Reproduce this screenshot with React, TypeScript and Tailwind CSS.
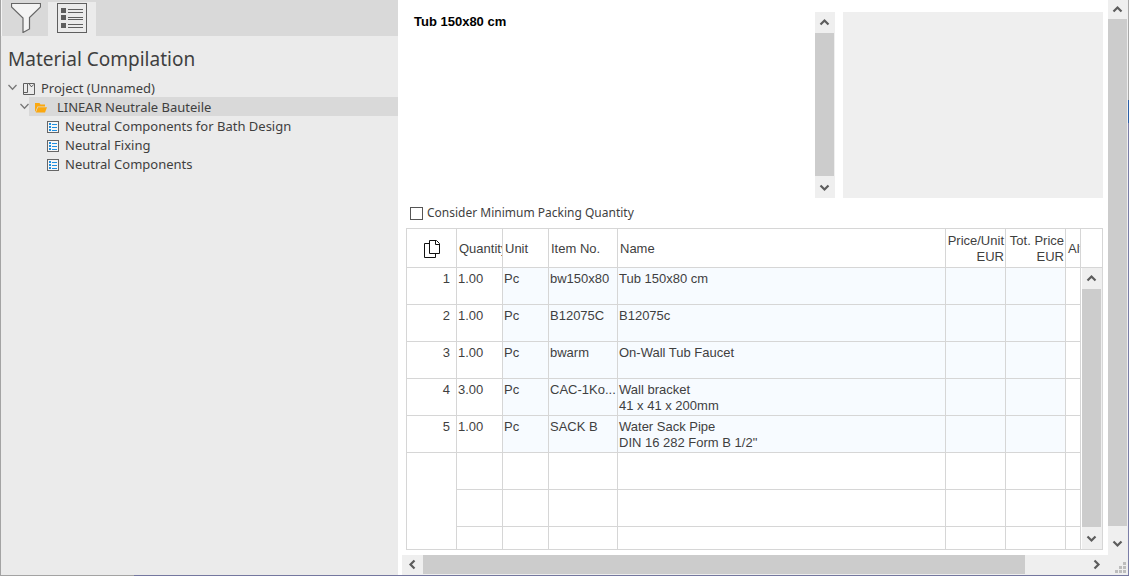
import { useState } from 'react';

type Item = {
  quantity: string;
  unit: string;
  itemNo: string;
  name: string[];
};

type Direction = 'up' | 'down' | 'left' | 'right';

const ITEMS: Item[] = [
  { quantity: '1.00', unit: 'Pc', itemNo: 'bw150x80', name: ['Tub 150x80 cm'] },
  { quantity: '1.00', unit: 'Pc', itemNo: 'B12075C', name: ['B12075c'] },
  { quantity: '1.00', unit: 'Pc', itemNo: 'bwarm', name: ['On-Wall Tub Faucet'] },
  { quantity: '3.00', unit: 'Pc', itemNo: 'CAC-1Ko...', name: ['Wall bracket', '41 x 41 x 200mm'] },
  { quantity: '1.00', unit: 'Pc', itemNo: 'SACK B', name: ['Water Sack Pipe', 'DIN 16 282 Form B 1/2"'] },
];

const EMPTY_ROWS = [0, 1, 2];

const LEAVES = ['Neutral Components for Bath Design', 'Neutral Fixing', 'Neutral Components'];

const ARROWS: Record<Direction, string> = {
  up: 'M1.5 7.5L5.5 3.5L9.5 7.5',
  down: 'M1.5 3.5L5.5 7.5L9.5 3.5',
  left: 'M7.5 1.5L3.5 5.5L7.5 9.5',
  right: 'M3.5 1.5L7.5 5.5L3.5 9.5',
};

function Arrow({ direction }: { direction: Direction }) {
  return (
    <svg width="11" height="11" viewBox="0 0 11 11" fill="none" stroke="#5c5c5c" strokeWidth="2.2">
      <path d={ARROWS[direction]} />
    </svg>
  );
}

function VerticalScrollbar() {
  return (
    <div className="flex w-5 shrink-0 flex-col bg-[#efefef] pr-px">
      <button aria-label="Scroll up" className="flex h-[21px] shrink-0 items-center justify-center">
        <Arrow direction="up" />
      </button>
      <div className="flex-1 bg-[#cccccc]" />
      <button aria-label="Scroll down" className="flex h-[22px] shrink-0 items-center justify-center">
        <Arrow direction="down" />
      </button>
    </div>
  );
}

function FunnelIcon() {
  return (
    <svg width="30" height="30" viewBox="0 0 30 30" fill="#f4f4f4" stroke="#666666">
      <path d="M0.5 0.5H29.5V4L18.5 14.5V26L12 29.5V15L0.5 4Z" strokeWidth="1.2" />
    </svg>
  );
}

function ListIcon() {
  return (
    <svg width="30" height="30" viewBox="0 0 30 30" shapeRendering="crispEdges">
      <rect x="0.5" y="0.5" width="29" height="29" fill="none" stroke="#5f5f5f" />
      <path d="M4 5h5v5H4zM4 12h5v5H4zM4 20h5v5H4z" fill="#5f5f5f" />
      <path d="M11 6.5h15M11 9.5h15M11 14.5h15M11 16.5h15M11 21.5h15M11 24.5h15" stroke="#5f5f5f" />
    </svg>
  );
}

function TreeArrow() {
  return (
    <svg width="9" height="7" viewBox="0 0 9 7" fill="none" stroke="#777777" className="shrink-0">
      <path d="M0.5 1L4.5 5.2L8.5 1" strokeWidth="1.3" />
    </svg>
  );
}

function ProjectIcon() {
  return (
    <svg width="12" height="12" viewBox="0 0 12 12" fill="none" stroke="#5f5f5f" className="shrink-0">
      <path d="M4.5 9.5V0.5H0.5V11.5H11.5V0.5H4.5" />
      <path d="M0.5 9.5H4.5M6 0.5L8 3.5H9L10.5 1.5" />
    </svg>
  );
}

function FolderIcon() {
  return (
    <svg width="12" height="10" viewBox="0 0 12 10" fill="#fba80f" className="shrink-0">
      <path d="M0 0H4.5L5.5 1.5H10V3.5H2.5L0.5 8.5H0Z" />
      <path d="M3 4.3H12L10 9.5H0.8Z" />
    </svg>
  );
}

function LeafIcon() {
  return (
    <svg width="12" height="12" viewBox="0 0 12 12" fill="none" shapeRendering="crispEdges" className="shrink-0">
      <rect x="0.5" y="0.5" width="11" height="11" fill="#f6f6f6" stroke="#666666" />
      <path d="M2 2h2v2H2zM2 5h2v2H2zM2 8h2v2H2z" fill="#1f8fe0" />
      <path d="M5 3.5h5M5 6.5h5M5 9.5h5" stroke="#1f8fe0" />
    </svg>
  );
}

function CopyIcon() {
  return (
    <svg width="17" height="19" viewBox="0 0 17 19" fill="none" stroke="#111111" className="mr-[15px] ml-auto">
      <path d="M5.5 3.5H0.5V17.5H11.5V14" />
      <path d="M5.5 0.5H12.5L15.5 3.5V13.5H5.5Z" fill="#ffffff" />
      <path d="M11.5 0.5V4.5H15.5" />
    </svg>
  );
}

function Sidebar() {
  return (
    <aside className="flex w-[398px] shrink-0 flex-col border-l border-[#a3a3a3] bg-[#ebebeb] font-['Noto_Sans',sans-serif] text-[#3f3f3f]">
      <div className="flex h-9 border-l border-[#f4f4f4] bg-[#d9d9d9]">
        <button aria-label="Filter" className="w-[46px] pl-[9px]">
          <FunnelIcon />
        </button>
        <button aria-label="Material list" className="mt-0.5 w-12 bg-[#ebebeb] pb-0.5 pl-[9px]">
          <ListIcon />
        </button>
      </div>
      <h1 className="mt-2 pl-[7px] text-[19px] leading-[30px]">Material Compilation</h1>
      <ul className="mt-1 text-[13px] leading-[19px]">
        <li className="flex h-[19px] items-center pl-[7px]">
          <TreeArrow />
          <span className="ml-1.5 flex items-center gap-1.5 pt-0.5">
            <ProjectIcon />
            Project (Unnamed)
          </span>
        </li>
        <li className="flex h-[19px] items-center pl-[19px]">
          <TreeArrow />
          <span className="flex h-[19px] flex-1 items-center gap-2.5 bg-[#d9d9d9] pt-0.5 pl-1.5">
            <FolderIcon />
            LINEAR Neutrale Bauteile
          </span>
        </li>
        {LEAVES.map((leaf) => (
          <li key={leaf} className="flex h-[19px] items-center gap-1.5 pt-0.5 pl-[46px]">
            <LeafIcon />
            {leaf}
          </li>
        ))}
      </ul>
    </aside>
  );
}

function ItemTable() {
  return (
    <div className="flex min-h-0 flex-1 overflow-hidden border border-[#d6d6d6] text-[13px] leading-4 text-[#3f3f3f]">
      <div className="min-w-0 flex-1 overflow-hidden">
        <table className="w-full table-fixed border-separate border-spacing-0 [&_td]:border-r [&_td]:border-b [&_td]:border-[#d6d6d6] [&_th]:border-r [&_th]:border-b [&_th]:border-[#d6d6d6] [&_th]:pt-0.5 [&_th]:font-normal">
          <colgroup>
            <col className="w-[50px]" />
            <col className="w-[46px]" />
            <col className="w-[46px]" />
            <col className="w-[69px]" />
            <col />
            <col className="w-[60px]" />
            <col className="w-[60px]" />
            <col className="w-[15px]" />
          </colgroup>
          <thead>
            <tr className="h-[39px] text-left whitespace-nowrap">
              <th aria-label="Copy">
                <CopyIcon />
              </th>
              <th className="overflow-hidden pl-0.5">Quantity</th>
              <th className="overflow-hidden pl-0.5">Unit</th>
              <th className="overflow-hidden pl-0.5">Item No.</th>
              <th className="overflow-hidden pl-0.5">Name</th>
              <th className="overflow-hidden pr-px text-right">
                Price/Unit
                <br />
                EUR
              </th>
              <th className="overflow-hidden pr-px text-right">
                Tot. Price
                <br />
                EUR
              </th>
              <th className="overflow-hidden pl-0.5">Alt</th>
            </tr>
          </thead>
          <tbody>
            {ITEMS.map((item, i) => (
              <tr key={item.itemNo} className="h-[37px] align-top">
                <td className="pt-[3px] pr-1.5 text-right">{i + 1}</td>
                <td className="pt-[3px] pl-px">{item.quantity}</td>
                <td className="bg-[#f7fbff] pt-[3px] pl-px">{item.unit}</td>
                <td className="overflow-hidden bg-[#f7fbff] pt-[3px] pl-px whitespace-nowrap">{item.itemNo}</td>
                <td className="bg-[#f7fbff] pt-[3px] pl-px">
                  {item.name.map((line) => (
                    <div key={line}>{line}</div>
                  ))}
                </td>
                <td className="bg-[#f7fbff]" />
                <td className="bg-[#f7fbff]" />
                <td />
              </tr>
            ))}
            {EMPTY_ROWS.map((row) => (
              <tr key={row} className="h-[37px]">
                {row === 0 && <td rowSpan={EMPTY_ROWS.length} />}
                <td />
                <td />
                <td />
                <td />
                <td />
                <td />
                <td />
              </tr>
            ))}
          </tbody>
        </table>
      </div>
      <div className="flex w-[21px] shrink-0 flex-col">
        <div className="h-[39px] shrink-0 border-b border-[#d6d6d6]" />
        <div className="flex flex-1 pl-px">
          <VerticalScrollbar />
        </div>
      </div>
    </div>
  );
}

export default function App() {
  const [packing, setPacking] = useState(false);

  return (
    <div className="flex h-screen flex-col overflow-hidden bg-white font-['Liberation_Sans',Arial,sans-serif]">
      <div className="flex min-h-0 flex-1">
        <Sidebar />
        <div className="flex min-w-0 flex-1 flex-col">
          <main className="flex min-h-0 flex-1 flex-col pt-3 pr-[5px] pb-[5px] pl-2">
            <div className="flex h-[186px] shrink-0">
              <textarea
                readOnly
                aria-label="Description"
                defaultValue="Tub 150x80 cm"
                className="min-w-0 flex-1 resize-none pt-0.5 pl-2 text-[13px] leading-4 font-bold text-black outline-none"
              />
              <VerticalScrollbar />
              <div className="ml-2 w-[260px] shrink-0 bg-[#efefef]" />
            </div>
            <label className="flex h-[30px] shrink-0 items-center gap-1 pl-1 font-['Noto_Sans',sans-serif] text-[12px] text-[#3f3f3f]">
              <input
                type="checkbox"
                checked={packing}
                onChange={(e) => setPacking(e.target.checked)}
                className="size-[13px] appearance-none border border-[#555555] bg-white checked:bg-[#555555]"
              />
              Consider Minimum Packing Quantity
            </label>
            <ItemTable />
          </main>
          <div className="ml-1 flex h-5 shrink-0 bg-[#efefef] pb-px">
            <button aria-label="Scroll left" className="flex w-[21px] items-center justify-center">
              <Arrow direction="left" />
            </button>
            <div className="flex-1 bg-[#cccccc]" />
            <button aria-label="Scroll right" className="flex w-[83px] items-center justify-end pr-1.5">
              <Arrow direction="right" />
            </button>
          </div>
        </div>
        <div className="flex w-5 shrink-0 flex-col bg-[#efefef] pr-px">
          <button aria-label="Scroll page up" className="flex h-[19px] items-center justify-center">
            <Arrow direction="up" />
          </button>
          <div className="flex-1 bg-[#cccccc]" />
          <button aria-label="Scroll page down" className="flex h-9 items-center justify-center pb-0.5">
            <Arrow direction="down" />
          </button>
          <svg width="11" height="13" viewBox="0 0 11 13" fill="#bdbdbd" className="mr-px ml-auto">
            <path d="M8 0h3v3H8zM4 4h3v3H4zM8 4h3v3H8zM0 8h3v3H0zM4 8h3v3H4zM8 8h3v3H8z" />
          </svg>
        </div>
        <div className="flex w-px shrink-0 flex-col">
          <div className="h-[100px] bg-[#a8a8a8]" />
          <div className="h-[23px] bg-[#2b5fa8]" />
          <div className="flex-1 bg-[#7b7ea8]" />
        </div>
      </div>
      <div className="flex h-px shrink-0">
        <div className="w-[134px] bg-[#a3a3a3]" />
        <div className="flex-1 bg-[#74779f]" />
      </div>
    </div>
  );
}
